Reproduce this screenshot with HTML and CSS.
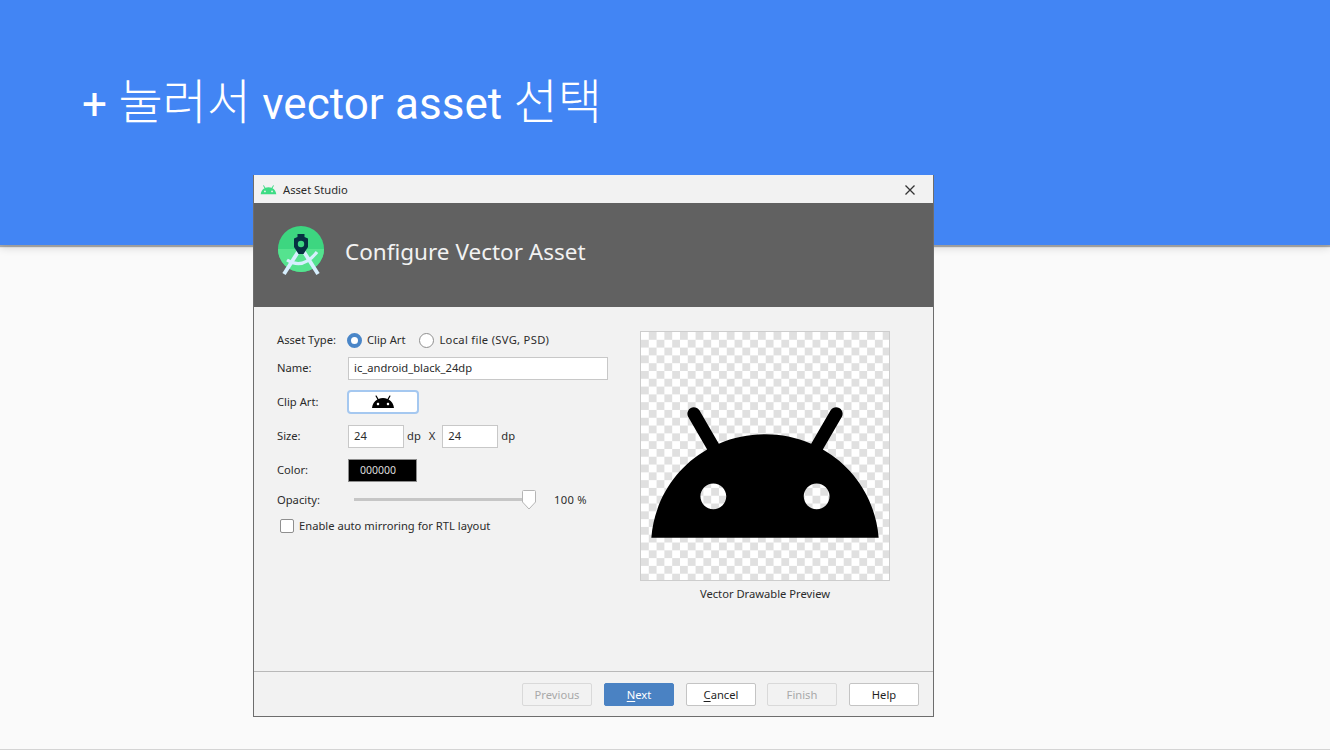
FILE: index.html
```html
<!DOCTYPE html>
<html lang="ko">
<head>
<meta charset="utf-8">
<title>Asset Studio</title>
<link rel="stylesheet" href="styles.css">
</head>
<body>
<svg class="defs" width="0" height="0" aria-hidden="true">
  <symbol id="droid" viewBox="0 0 24 24">
    <path d="M17.6 9.48l1.84-3.18c.16-.31.04-.69-.26-.85-.29-.15-.65-.06-.83.22l-1.88 3.24c-2.86-1.21-6.08-1.21-8.94 0L5.65 5.67c-.19-.29-.58-.38-.87-.2-.28.18-.37.54-.22.83L6.4 9.48C3.3 11.25 1.28 14.44 1 18h22c-.28-3.56-2.3-6.75-5.4-8.52zM7 15.25c-.69 0-1.25-.56-1.25-1.25s.56-1.25 1.25-1.25 1.25.56 1.25 1.25-.56 1.25-1.25 1.25zm10 0c-.69 0-1.25-.56-1.25-1.25s.56-1.25 1.25-1.25 1.25.56 1.25 1.25-.56 1.25-1.25 1.25z"/>
  </symbol>
</svg>
<main class="slide">
  <header class="banner">
    <h1 class="headline">+ <span class="ko">눌러서</span> vector asset <span class="ko">선택</span></h1>
  </header>
  <section class="dialog">
    <div class="titlebar">
      <svg class="titlebar-icon" viewBox="0 5 24 14"><use href="#droid" width="24" height="24"/></svg>
      <span class="titlebar-text">Asset Studio</span>
      <svg class="close" viewBox="0 0 10 10"><path d="M.5.5l9 9M9.5.5l-9 9"/></svg>
    </div>
    <div class="wizard-head">
      <svg class="studio-logo" viewBox="0 0 50 54">
        <circle cx="25" cy="23" r="23" fill="#3dd680"/>
        <path d="M2 23a23 23 0 0 0 46 0z" fill="#55e38f"/>
        <path d="M22 26 8 48" class="logo-line"/>
        <path d="M28 26 42 48" class="logo-line"/>
        <path d="M11 34Q27 44 41 26" class="logo-line logo-arc"/>
        <path d="M21.500 8h7v3l3.500 1.500V21L27.500 28h-5L18 21v-8.500l3.500-1.500z" fill="#073042"/>
        <circle cx="25" cy="18" r="3.200" fill="#3dd680"/>
      </svg>
      <h2 class="wizard-title">Configure Vector Asset</h2>
    </div>
    <div class="wizard-body">
      <div class="form">
        <span class="label">Asset Type:</span>
        <div class="control radios">
          <span class="radio radio-on"></span><span class="radio-text radio-text-first">Clip Art</span>
          <span class="radio"></span><span class="radio-text radio-text-wide">Local file (SVG, PSD)</span>
        </div>
        <span class="label">Name:</span>
        <div class="control"><span class="field field-name">ic_android_black_24dp</span></div>
        <span class="label">Clip Art:</span>
        <div class="control">
          <span class="clip-btn"><svg class="clip-icon" viewBox="0 0 24 24"><use href="#droid" width="24" height="24"/></svg></span>
        </div>
        <span class="label">Size:</span>
        <div class="control size-row">
          <span class="field field-size">24</span><span class="unit">dp</span><span class="unit-x">X</span>
          <span class="field field-size">24</span><span class="unit">dp</span>
        </div>
        <span class="label">Color:</span>
        <div class="control"><span class="swatch">000000</span></div>
        <span class="label">Opacity:</span>
        <div class="control">
          <div class="slider">
            <span class="track"></span>
            <svg class="thumb" viewBox="0 0 16 20"><path d="M1.500 1.500a1 1 0 0 1 1-1h11a1 1 0 0 1 1 1V12L8 19 1.500 12z"/></svg>
          </div>
          <span class="percent">100 %</span>
        </div>
        <label class="check-row"><span class="checkbox"></span><span>Enable auto mirroring for RTL layout</span></label>
      </div>
      <figure class="preview">
        <div class="canvas"><svg class="canvas-icon" viewBox="0 -1.900 24 24"><use href="#droid" width="24" height="24"/></svg></div>
        <figcaption class="caption">Vector Drawable Preview</figcaption>
      </figure>
    </div>
    <footer class="wizard-foot">
      <span class="btn btn-off">Previous</span>
      <span class="btn btn-main"><u>N</u>ext</span>
      <span class="btn btn-cancel"><u>C</u>ancel</span>
      <span class="btn btn-off">Finish</span>
      <span class="btn">Help</span>
    </footer>
  </section>
</main>
</body>
</html>
```
FILE: styles.css
```css
* { box-sizing: border-box; }
html, body { margin: 0; padding: 0; }
body { width: 1330px; height: 750px; overflow: hidden; background: #fafafa; }
.defs { position: absolute; }

.slide {
  position: relative;
  width: 1330px;
  height: 750px;
  background: #fafafa;
  border-bottom: 1px solid #d4d4d4;
}
.banner {
  height: 245px;
  padding: 66px 0 0 82px;
  background: #4285f4;
  box-shadow: 0 2px 1px rgba(0,0,0,.3), 0 3px 8px rgba(0,0,0,.14);
}
.headline {
  margin: 0;
  font: 400 44px/64px Roboto, "Noto Sans CJK KR", sans-serif;
  word-spacing: .5px;
  color: #fff;
}
.ko {
  font: 300 48px/64px "Noto Sans CJK KR", sans-serif;
}

.dialog {
  position: absolute;
  left: 253px;
  top: 175px;
  width: 681px;
  height: 542px;
  display: flex;
  flex-direction: column;
  background: #f2f2f2;
  border: 1px solid #6d6d6d;
  border-top: 0;
  font: 400 11.2px/16px "Noto Sans", "Noto Sans CJK KR", sans-serif;
  color: #2b2b2b;
}
.titlebar {
  height: 28px;
  flex: none;
  display: flex;
  align-items: center;
  padding: 1px 18px 0 6px;
  background: #f2f2f2;
}
.titlebar-icon { width: 17px; height: 10px; fill: #3ddc84; margin-right: 6px; }
.titlebar-text { flex: 1; }
.close { width: 10px; height: 10px; }
.close path { stroke: #333; stroke-width: 1.300; fill: none; }

.wizard-head {
  height: 104px;
  flex: none;
  display: flex;
  align-items: center;
  padding: 0 0 0 21.500px;
  background: #616161;
}
.studio-logo { width: 50px; height: 54px; margin: -4px 19.500px 0 0; }
.logo-line { fill: none; stroke: #d7effe; stroke-width: 3.800; }
.logo-arc { stroke-width: 3.200; }
.wizard-title {
  margin: -7px 0 0;
  font: 400 22.500px/30px "Noto Sans", sans-serif;
  color: #f2f2f2;
}

.wizard-body {
  flex: 1;
  display: flex;
  padding: 19px 0 0 23px;
}
.form {
  width: 331px;
  display: grid;
  grid-template-columns: 71px 260px;
  grid-template-rows: 28px 28px 40px 28px 40px 20px 30px;
  align-items: center;
  align-content: start;
}
.control { display: flex; align-items: center; }
.radios { margin-left: -1px; }
.radio {
  width: 15px;
  height: 15px;
  border-radius: 50%;
  border: 1px solid #8f8f8f;
  background: #fff;
}
.radio-on { border: 4px solid #4a86c8; }
.radio-text { margin: 0 12px 0 5px; }
.radio-text-first { margin-right: 14px; }
.radio-text-wide { letter-spacing: .3px; }
.field {
  display: flex;
  align-items: center;
  height: 23px;
  padding: 0 5px;
  background: #fff;
  border: 1px solid #c8c8c8;
}
.field-name { width: 260px; }
.field-size { width: 56px; }
.clip-btn {
  width: 72px;
  height: 24px;
  margin-left: -1px;
  display: flex;
  align-items: center;
  justify-content: center;
  background: #fff;
  border: 2px solid #a5c8f0;
  border-radius: 4px;
}
.clip-icon { width: 24px; height: 24px; }
.unit { margin-left: 3px; }
.unit-x { margin: 0 7px 0 8px; }
.swatch {
  width: 69px;
  height: 23px;
  display: flex;
  align-items: center;
  padding-left: 11px;
  background: #000;
  border: 1px solid #8c8c8c;
  color: #dcdcdc;
  font-size: 10.500px;
}
.slider {
  width: 183px;
  height: 20px;
  margin-left: 6px;
  display: flex;
  align-items: center;
}
.track { flex: 1; height: 3px; background: #c6c6c6; margin: -2px -1px 0 0; }
.thumb { width: 16px; height: 20px; flex: none; }
.thumb path { fill: #fff; stroke: #b5b5b5; }
.percent { margin-left: 17px; letter-spacing: .3px; }
.check-row {
  grid-column: 1 / 3;
  display: flex;
  align-items: center;
  padding: 1px 0 0 3px;
}
.checkbox {
  width: 14px;
  height: 14px;
  margin-right: 5px;
  background: #fff;
  border: 1px solid #8f8f8f;
  border-radius: 2px;
}

.preview {
  margin: 5px 0 0 32px;
  width: 250px;
}
.canvas {
  width: 250px;
  height: 250px;
  border: 1px solid #cdcdcd;
  background-color: #fff;
  background-image: conic-gradient(#e0e0e0 25%, #fff 0 50%, #e0e0e0 0 75%, #fff 0);
  background-size: 15.600px 15.600px;
}
.canvas-icon { display: block; width: 248px; height: 248px; }
.caption { text-align: center; margin-top: 5px; }

.wizard-foot {
  height: 45px;
  flex: none;
  display: flex;
  justify-content: flex-end;
  gap: 12px;
  padding: 11px 14px 0 0;
  border-top: 1px solid #b9b9b9;
}
.btn {
  width: 70px;
  height: 23px;
  display: flex;
  align-items: center;
  justify-content: center;
  background: #fff;
  border: 1px solid #c4c4c4;
  border-radius: 2px;
  color: #1f1f1f;
}
.btn u { text-underline-offset: 2px; }
.btn-cancel { margin-right: -1px; }
.btn-off { background: #f2f2f2; border-color: #d9d9d9; color: #a9a9a9; }
.btn-main { background: #4a82c3; border-color: #4a82c3; color: #fff; }
```
